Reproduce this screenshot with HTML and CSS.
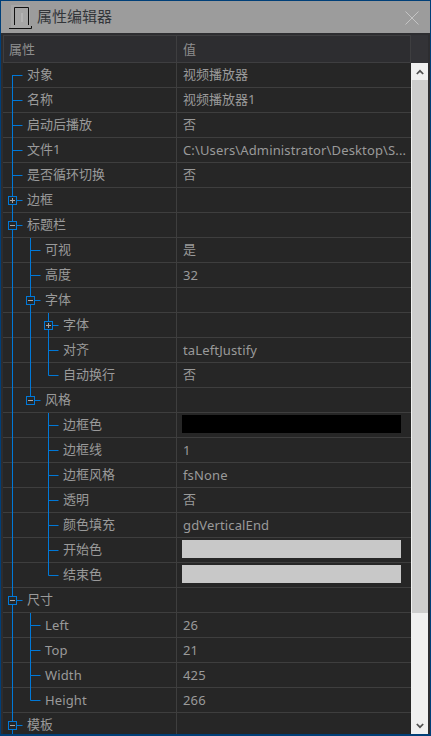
FILE: index.html
```html
<!DOCTYPE html>
<html lang="zh-CN">
<head>
<meta charset="utf-8">
<title>属性编辑器</title>
<link rel="stylesheet" href="styles.css">
</head>
<body>
<div class="window">
  <header class="titlebar">
    <svg class="logo" width="24" height="26" viewBox="0 0 24 26">
      <rect x="2" y="1" width="19" height="23" fill="#a6a6a6"/>
      <rect x="12" y="9" width="2" height="9" fill="#b4b4b4"/>
      <path d="M5.5 21V3.5H19.5V21M0 24.5H22.5V22" fill="none" stroke="#111" stroke-width="1"/>
    </svg>
    <span class="title">属性编辑器</span>
    <svg class="close" width="14" height="14" viewBox="0 0 14 14"><path d="M0.5 0.5L13.5 13.5M13.5 0.5L0.5 13.5" stroke="#c4c4c4" stroke-width="1" fill="none"/></svg>
  </header>
  <div class="content">
    <div class="head">
      <div class="head-row"><div class="hc hc-name">属性</div><div class="hc">值</div></div>
      <div class="head-fill"></div>
    </div>
    <div class="body">
      <div class="grid">
        <div class="row l1"><div class="name">对象</div><div class="val">视频播放器</div></div>
        <div class="row l1"><div class="name">名称</div><div class="val">视频播放器1</div></div>
        <div class="row l1"><div class="name">启动后播放</div><div class="val">否</div></div>
        <div class="row l1"><div class="name">文件1</div><div class="val lat">C:\Users\Administrator\Desktop\S...</div></div>
        <div class="row l1"><div class="name">是否循环切换</div><div class="val">否</div></div>
        <div class="row l1"><div class="name">边框</div><div class="val"></div></div>
        <div class="row l1"><div class="name">标题栏</div><div class="val"></div></div>
        <div class="row l2"><div class="name">可视</div><div class="val">是</div></div>
        <div class="row l2"><div class="name">高度</div><div class="val lat">32</div></div>
        <div class="row l2"><div class="name">字体</div><div class="val"></div></div>
        <div class="row l3"><div class="name">字体</div><div class="val"></div></div>
        <div class="row l3"><div class="name">对齐</div><div class="val lat">taLeftJustify</div></div>
        <div class="row l3"><div class="name">自动换行</div><div class="val">否</div></div>
        <div class="row l2"><div class="name">风格</div><div class="val"></div></div>
        <div class="row l3"><div class="name">边框色</div><div class="val"><div class="swatch black"></div></div></div>
        <div class="row l3"><div class="name">边框线</div><div class="val lat">1</div></div>
        <div class="row l3"><div class="name">边框风格</div><div class="val lat">fsNone</div></div>
        <div class="row l3"><div class="name">透明</div><div class="val">否</div></div>
        <div class="row l3"><div class="name">颜色填充</div><div class="val lat">gdVerticalEnd</div></div>
        <div class="row l3"><div class="name">开始色</div><div class="val"><div class="swatch silver"></div></div></div>
        <div class="row l3"><div class="name">结束色</div><div class="val"><div class="swatch silver"></div></div></div>
        <div class="row l1"><div class="name">尺寸</div><div class="val"></div></div>
        <div class="row l2"><div class="name lat">Left</div><div class="val lat">26</div></div>
        <div class="row l2"><div class="name lat">Top</div><div class="val lat">21</div></div>
        <div class="row l2"><div class="name lat">Width</div><div class="val lat">425</div></div>
        <div class="row l2"><div class="name lat">Height</div><div class="val lat">266</div></div>
        <div class="row l1 last"><div class="name">模板</div><div class="val"></div></div>
        <svg class="tree" width="70" height="671" viewBox="0 0 70 671">
          <g class="lines">
            <path d="M9.5 12V671"/>
            <path d="M9.5 12.5H19.5M9.5 37.5H19.5M9.5 62.5H19.5M9.5 87.5H19.5M9.5 112.5H19.5M9.5 137.5H19.5M9.5 162.5H19.5M9.5 537.5H19.5M9.5 662.5H19.5"/>
            <path d="M27.5 175V337.5M27.5 187.5H37.5M27.5 212.5H37.5M27.5 237.5H37.5M27.5 337.5H37.5"/>
            <path d="M45.5 250V312.5H55.5M45.5 262.5H55.5M45.5 287.5H55.5"/>
            <path d="M45.5 350V512.5H55.5M45.5 362.5H55.5M45.5 387.5H55.5M45.5 412.5H55.5M45.5 437.5H55.5M45.5 462.5H55.5M45.5 487.5H55.5"/>
            <path d="M27.5 550V637.5H37.5M27.5 562.5H37.5M27.5 587.5H37.5M27.5 612.5H37.5"/>
          </g>
          <g class="boxes">
            <rect x="5.5" y="133.5" width="8" height="8"/>
            <rect x="5.5" y="158.5" width="8" height="8"/>
            <rect x="23.5" y="233.5" width="8" height="8"/>
            <rect x="41.5" y="258.5" width="8" height="8"/>
            <rect x="23.5" y="333.5" width="8" height="8"/>
            <rect x="5.5" y="533.5" width="8" height="8"/>
            <rect x="5.5" y="658.5" width="8" height="8"/>
          </g>
          <path class="signs" d="M7 137.5H12M9.5 135V140M7 162.5H12M25 237.5H30M43 262.5H48M45.5 260V265M25 337.5H30M7 537.5H12M7 662.5H12"/>
        </svg>
      </div>
      <div class="scrollbar">
        <div class="sb-btn"><svg width="8" height="6" viewBox="0 0 8 6"><path d="M0.8 5L4 1.8L7.2 5" fill="none" stroke="#505050" stroke-width="1.7"/></svg></div>
        <div class="thumb"></div>
        <div class="track"></div>
        <div class="sb-btn"><svg width="8" height="6" viewBox="0 0 8 6"><path d="M0.8 1L4 4.2L7.2 1" fill="none" stroke="#505050" stroke-width="1.7"/></svg></div>
      </div>
    </div>
  </div>
</div>
</body>
</html>
```

FILE: styles.css
```css
* { box-sizing: border-box; }
html, body { margin: 0; padding: 0; }
body {
  width: 431px;
  height: 736px;
  overflow: hidden;
  font-family: "Noto Sans", "Noto Sans CJK SC", sans-serif;
  font-size: 13px;
  color: #9a9a9a;
}
.window {
  width: 431px;
  height: 736px;
  border: 1px solid #003f78;
  border-width: 1px 1px 2px 1px;
  background: #2d2d30;
  display: flex;
  flex-direction: column;
}
.titlebar {
  height: 32px;
  background: #9c9c9c;
  display: flex;
  align-items: center;
  padding-left: 8px;
  padding-right: 11px;
  flex: none;
}
.logo { flex: none; }
.title {
  font-family: "Noto Sans CJK SC", sans-serif;
  font-size: 15px;
  line-height: 20px;
  color: #33363a;
  margin-left: 4px;
  margin-bottom: 2px;
  flex: 1;
}
.close { flex: none; margin-top: 1px; }
.content {
  flex: 1;
  display: flex;
  flex-direction: column;
  padding: 2px 2px 0 2px;
  background: #2d2d30;
}
.head { display: flex; height: 28px; flex: none; }
.head-row {
  width: 408px;
  display: flex;
  border: 1px solid #3e3e40;
  background: #2d2d30;
}
.head-fill { flex: 1; background: #333337; }
.hc {
  flex: 1;
  line-height: 25px;
  padding-left: 6px;
  font-family: "Noto Sans CJK SC", sans-serif;
  font-size: 13px;
  color: #8e8e8e;
}
.hc-name {
  flex: none;
  width: 173px;
  padding-left: 5px;
  border-right: 1px solid #3e3e40;
}
.body { display: flex; height: 671px; flex: none; }
.grid {
  position: relative;
  width: 408px;
  flex: none;
  background: #262626;
}
.row {
  display: flex;
  height: 25px;
  border-bottom: 1px solid #3e3e3e;
  line-height: 23px;
}
.row.last { height: 21px; border-bottom: 0; }
.name {
  width: 174px;
  flex: none;
  border-right: 1px solid #3e3e3e;
  white-space: nowrap;
}
.l1 .name { padding-left: 24px; }
.l2 .name { padding-left: 42px; }
.l3 .name { padding-left: 60px; }
.val {
  flex: 1;
  min-width: 0;
  padding-left: 6px;
  white-space: nowrap;
  overflow: hidden;
}
.lat { line-height: 25px; letter-spacing: 0.14px; }
.swatch { width: 219px; height: 18px; margin-top: 2px; margin-left: -1px; }
.black { background: #000; }
.silver { background: #c8c8c8; }
.tree { position: absolute; left: 0; top: 0; }
.lines path { fill: none; stroke: #0078d7; stroke-width: 1; }
.boxes rect { fill: #262626; stroke: #0078d7; stroke-width: 1; }
.signs { fill: none; stroke: #a8a8a8; stroke-width: 1; }
.scrollbar {
  width: 17px;
  flex: none;
  background: #f0f0f0;
  display: flex;
  flex-direction: column;
}
.sb-btn {
  height: 17px;
  flex: none;
  display: flex;
  align-items: center;
  justify-content: center;
}
.thumb { height: 533px; flex: none; background: #cdcdcd; margin-left: 1px; }
.track { flex: 1; }
```
